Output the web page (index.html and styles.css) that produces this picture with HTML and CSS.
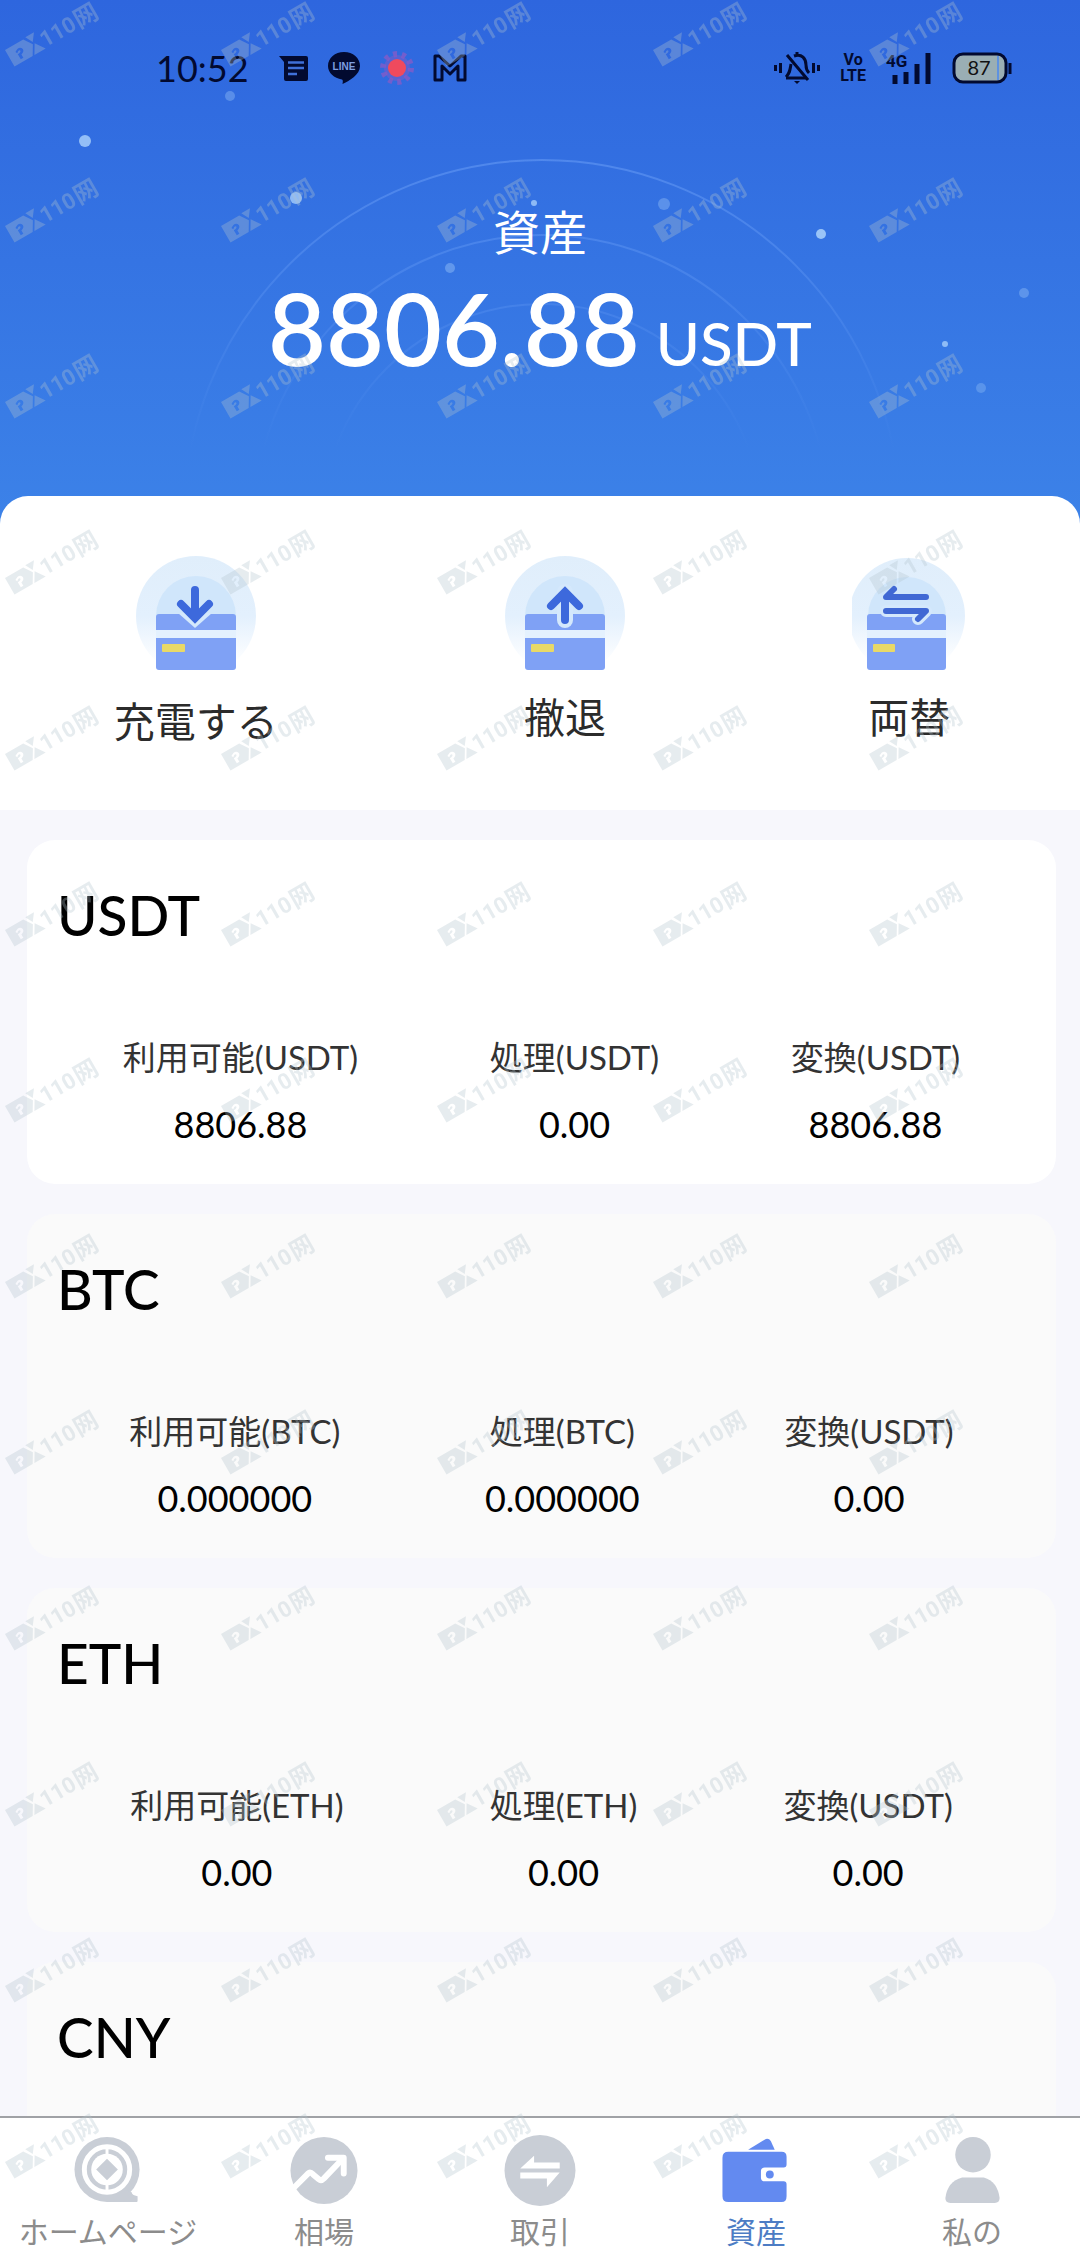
FILE: index.html
```html
<!DOCTYPE html>
<html lang="ja">
	<head>
		<meta charset="UTF-8">
		<meta name="viewport" content="width=device-width, initial-scale=1">
		<title>資産</title>
		<link rel="stylesheet" href="styles.css">
	</head>
	<body>
		<div class="screen">
			<main class="content">
				<header class="hero">
					<svg class="hero-bg" viewBox="0 0 1080 524" preserveAspectRatio="xMidYMin slice" aria-hidden="true">
						<defs>
							<linearGradient id="ring" gradientUnits="userSpaceOnUse" x1="0" y1="150" x2="0" y2="450">
								<stop offset="0" stop-color="#7fb0ff" stop-opacity=".4"/>
								<stop offset="1" stop-color="#7fb0ff" stop-opacity="0"/>
							</linearGradient>
						</defs>
						<g fill="none" stroke="url(#ring)" stroke-width="2">
							<circle cx="542" cy="518" r="358"/>
							<circle cx="542" cy="523" r="288"/>
							<circle cx="542" cy="524" r="220"/>
						</g>
						<g fill="#a5cdfa">
							<circle cx="85" cy="141" r="6" opacity=".85"/>
							<circle cx="230" cy="96" r="5" opacity=".35"/>
							<circle cx="296" cy="198" r="6" opacity=".8"/>
							<circle cx="534" cy="203" r="3" opacity=".8"/>
							<circle cx="664" cy="204" r="6" opacity=".35"/>
							<circle cx="821" cy="234" r="5" opacity=".9"/>
							<circle cx="450" cy="268" r="5" opacity=".4"/>
							<circle cx="1024" cy="293" r="5" opacity=".35"/>
							<circle cx="945" cy="344" r="3" opacity=".8"/>
							<circle cx="981" cy="388" r="5" opacity=".3"/>
						</g>
					</svg>

					<div class="status">
						<div class="status-left">
							<span class="time">10:52</span>
							<svg width="30" height="36" viewBox="0 0 30 36"><path d="M0 6h27q2 0 2 2v21q0 2-2 2H7q-2 0-2-2V12z" fill="#020a30"/><path d="M9 12.500h16M9 18h16M9 24h9" stroke="#3f70d8" stroke-width="2.500"/></svg>
							<svg width="34" height="36" viewBox="0 0 34 36"><path d="M17 2C8 2 1 8 1 16c0 7 6 12 14 13.500 1 .3 1 2 .5 4.500C22 31 33 25 33 16 33 8 26 2 17 2z" fill="#020a30"/><text x="17" y="20" class="line-text" text-anchor="middle">LINE</text></svg>
							<svg width="36" height="36" viewBox="0 0 36 36"><circle cx="18" cy="18" r="14" fill="none" stroke="#8e5ac4" stroke-width="6" stroke-dasharray="4 4.800" opacity=".7"/><circle cx="18" cy="18" r="13" fill="#7d5bc9" opacity=".5"/><circle cx="18" cy="18" r="9" fill="#ef4a5e"/></svg>
							<svg width="34" height="36" viewBox="0 0 34 36"><path d="M2 30V6h4l11 10L28 6h4v24h-7V16l-8 8-8-8v14z" fill="none" stroke="#020a30" stroke-width="3" stroke-linejoin="round"/></svg>
						</div>
						<div class="status-right">
							<svg width="46" height="36" viewBox="0 0 46 36"><g fill="none" stroke="#020a30" stroke-width="3"><path d="M1.500 15v6M6.500 13v10M39.500 13v10M44.500 15v6M13 5l21 25"/><path d="M12 28h20M17 14c-1 6-1 9-5 13M20 6c8-3 12 3 12 9 0 4 1 6 3 8M23 6V2"/></g><path d="M20 31h6l-3 3z" fill="#020a30"/></svg>
							<span class="volte">Vo<br>LTE</span>
							<svg width="46" height="36" viewBox="0 0 46 36"><text x="0" y="17" class="net-text">4G</text><path d="M9 25v9M20 22v12M31 14v20M42 3v31" stroke="#020a30" stroke-width="5"/></svg>
							<svg width="60" height="36" viewBox="0 0 60 36"><rect x="2" y="4" width="52" height="28" rx="9" fill="#9aaeb4" stroke="#020a30" stroke-width="3"/><path d="M46 6v24" stroke="#5e92e0" stroke-width="2"/><path d="M58 13v11" stroke="#020a30" stroke-width="3"/><text x="27" y="25" class="battery-text" text-anchor="middle">87</text></svg>
						</div>
					</div>

					<h1 class="hero-title">資産</h1>
					<p class="amount">8806.88<span class="unit">USDT</span></p>
				</header>

				<section class="actions">
					<svg class="defs" width="0" height="0" aria-hidden="true">
						<defs>
							<linearGradient id="halo" x1="0" y1="0" x2="0" y2="1">
								<stop offset="0" stop-color="#e0eefb"/>
								<stop offset=".5" stop-color="#e3f0fd"/>
								<stop offset=".9" stop-color="#ffffff"/>
							</linearGradient>
						</defs>
					</svg>
					<button type="button" class="action">
						<svg width="120" height="124" viewBox="0 0 120 124">
							<circle cx="60" cy="60" r="60" fill="url(#halo)"/>
							<circle cx="60" cy="60" r="40" fill="#d0e6fb"/>
							<path d="M23 58h74q3 0 3 3v13H20V61q0-3 3-3z" fill="#7fa1f5"/>
							<path d="M20 74h80v8H20z" fill="#e4f1fe"/>
							<path d="M20 82h80v29q0 3-3 3H23q-3 0-3-3z" fill="#7fa1f5"/>
							<rect x="26" y="88" width="23" height="8" rx="1" fill="#e8d967"/>
							<path d="M42 57h34L59 72z" fill="#d4e8fc"/>
							<path d="M59 34v26M45 48l14 14 14-14" fill="none" stroke="#3d69dc" stroke-width="8" stroke-linecap="round"/>
						</svg>
						<span>充電する</span>
					</button>
					<button type="button" class="action">
						<svg width="120" height="120" viewBox="0 0 120 120">
							<circle cx="60" cy="60" r="60" fill="url(#halo)"/>
							<circle cx="60" cy="60" r="40" fill="#d0e6fb"/>
							<path d="M23 58h74q3 0 3 3v13H20V61q0-3 3-3z" fill="#7fa1f5"/>
							<path d="M20 74h80v8H20z" fill="#e4f1fe"/>
							<path d="M20 82h80v29q0 3-3 3H23q-3 0-3-3z" fill="#7fa1f5"/>
							<rect x="26" y="88" width="23" height="8" rx="1" fill="#e8d967"/>
							<path d="M60 36v28" fill="none" stroke="#d4e8fc" stroke-width="16" stroke-linecap="round"/>
							<path d="M60 37v27M46 50l14-14 14 14" fill="none" stroke="#3d69dc" stroke-width="8" stroke-linecap="round"/>
						</svg>
						<span>撤退</span>
					</button>
					<button type="button" class="action">
						<svg width="114" height="120" viewBox="0 0 114 120">
							<circle cx="55" cy="60" r="58" fill="url(#halo)"/>
							<circle cx="55" cy="60" r="39" fill="#d0e6fb"/>
							<path d="M18 58h73q3 0 3 3v13H15V61q0-3 3-3z" fill="#7fa1f5"/>
							<path d="M15 74h79v8H15z" fill="#e4f1fe"/>
							<path d="M15 82h79v29q0 3-3 3H18q-3 0-3-3z" fill="#7fa1f5"/>
							<rect x="21" y="88" width="22" height="8" rx="1" fill="#e8d967"/>
							<path d="M34 55h40l-8 8" fill="none" stroke="#d4e8fc" stroke-width="12" stroke-linecap="round" stroke-linejoin="round"/>
							<path d="M74 41H34l8-8M34 55h40l-8 8" fill="none" stroke="#4068d4" stroke-width="6" stroke-linecap="round" stroke-linejoin="round"/>
						</svg>
						<span>両替</span>
					</button>
				</section>

				<section class="coins">
					<article class="coin coin-active">
						<h2>USDT</h2>
						<dl class="figures">
							<div><dt>利用可能(USDT)</dt><dd>8806.88</dd></div>
							<div><dt>処理(USDT)</dt><dd>0.00</dd></div>
							<div><dt>変換(USDT)</dt><dd>8806.88</dd></div>
						</dl>
					</article>
					<article class="coin">
						<h2>BTC</h2>
						<dl class="figures">
							<div><dt>利用可能(BTC)</dt><dd>0.000000</dd></div>
							<div><dt>処理(BTC)</dt><dd>0.000000</dd></div>
							<div><dt>変換(USDT)</dt><dd>0.00</dd></div>
						</dl>
					</article>
					<article class="coin">
						<h2>ETH</h2>
						<dl class="figures">
							<div><dt>利用可能(ETH)</dt><dd>0.00</dd></div>
							<div><dt>処理(ETH)</dt><dd>0.00</dd></div>
							<div><dt>変換(USDT)</dt><dd>0.00</dd></div>
						</dl>
					</article>
					<article class="coin coin-last">
						<h2>CNY</h2>
					</article>
				</section>
			</main>

			<nav class="tabbar">
				<a href="#home">
					<svg width="72" height="72" viewBox="0 0 72 72"><circle cx="35" cy="35" r="33" fill="#c9ced6"/><path d="M35 48l25 10q0 3 6 4v5q0 1-1 1H35z" fill="#c9ced6"/><circle cx="35" cy="35" r="23" fill="none" stroke="#fff" stroke-width="5"/><circle cx="35" cy="35" r="16" fill="#fff"/><path d="M35 13v8M35 49v8" stroke="#fff" stroke-width="3"/><path d="M35 24l11 11-11 11-11-11z" fill="#c9ced6"/></svg>
					<span>ホームページ</span>
				</a>
				<a href="#market">
					<svg width="72" height="72" viewBox="0 0 72 72"><circle cx="36" cy="36" r="34" fill="#c9ced6"/><path d="M5 54l15-15q2-2 5 1l6 5q2 2 5-1l20-21" fill="none" stroke="#fff" stroke-width="6"/><path d="M40 23h16v16" fill="none" stroke="#fff" stroke-width="6" stroke-linecap="round" stroke-linejoin="round"/></svg>
					<span>相場</span>
				</a>
				<a href="#trade">
					<svg width="72" height="72" viewBox="0 0 72 72"><circle cx="36" cy="36" r="36" fill="#c9ced6"/><path d="M16 34l14-13v7h26v6zM56 38L43 53v-9H16v-6z" fill="#fff"/></svg>
					<span>取引</span>
				</a>
				<a href="#assets" class="current">
					<svg width="72" height="72" viewBox="0 0 72 72"><path d="M28 15l18-11q3-1 5 2l4 9z" fill="#638af0"/><path d="M8 17h54q5 0 5 5v8q0 3-3 3H45q-4 0-4 4v6q0 4 4 4h19q3 0 3 3v12q0 6-5 6H8q-6 0-6-6V23q0-6 6-6z" fill="#638af0"/><circle cx="50" cy="40" r="4" fill="#638af0"/></svg>
					<span>資産</span>
				</a>
				<a href="#mine">
					<svg width="72" height="72" viewBox="0 0 72 72"><circle cx="37" cy="20" r="18" fill="#c9ced6"/><path d="M26 43h22q14 4 16 21 0 5-5 5H14q-5 0-5-5 2-17 17-21z" fill="#c9ced6"/></svg>
					<span>私の</span>
				</a>
			</nav>

			<!-- repeating watermark over the whole screen -->
			<svg class="watermark" width="100%" height="100%" aria-hidden="true">
				<defs>
					<pattern id="mark" width="216" height="176" patternUnits="userSpaceOnUse">
						<g transform="translate(5 50) rotate(-30)">
							<path d="M0 0h21l6 9-6 10H0zM24-1h10l-6 8zM29 9l7 10H23zM8 7q6-4 8 1 0 3-4 4v4h-3v-6q4 0 4-2-1-2-4 1z" fill-rule="evenodd"/>
							<text x="36" y="18" class="mark-num">110</text>
							<text x="75" y="19" class="mark-cjk">网</text>
						</g>
					</pattern>
				</defs>
				<rect width="100%" height="100%" fill="url(#mark)"/>
			</svg>
		</div>
	</body>
</html>
```
FILE: styles.css
```css
*{
	margin: 0;
	padding: 0;
	box-sizing: border-box;
}
body{
	font-family: Lato, "Noto Sans CJK JP", sans-serif;
	color: #111;
	background: #f7f7fc;
}
.screen{
	position: relative;
	display: flex;
	flex-direction: column;
	height: 100vh;
}
.content{
	flex: 1;
	min-height: 0;
	overflow: hidden;
}

/* header */
.hero{
	position: relative;
	padding-bottom: 142px;
	color: #fff;
	text-align: center;
	background: linear-gradient(#2e66de, #3c82e8);
}
.hero-bg{
	position: absolute;
	left: 0;
	top: 0;
	width: 100%;
	height: 100%;
}
.status{
	position: relative;
	display: flex;
	justify-content: space-between;
	padding: 50px 68px 50px 156px;
	color: #020a30;
}
.status-left, .status-right{
	display: flex;
	align-items: center;
	height: 36px;
}
.status-left{
	gap: 18px;
}
.status-right{
	gap: 20px;
}
.time{
	margin-right: 12px;
	font-size: 36px;
	line-height: 36px;
}
.volte{
	font: bold 16px/16px Roboto, sans-serif;
	text-align: center;
}
.line-text{
	font: bold 10px "Liberation Sans", sans-serif;
	fill: #7f9fe0;
}
.net-text{
	font: bold 17px Roboto, sans-serif;
	fill: #020a30;
}
.battery-text{
	font: 20px Lato, sans-serif;
	fill: #111;
}
.hero-title{
	position: relative;
	margin-top: 66px;
	font-size: 47px;
	font-weight: 400;
	line-height: 60px;
}
.amount{
	position: relative;
	margin-top: 10px;
	font-size: 100px;
	font-weight: 600;
	line-height: 110px;
}
.unit{
	margin-left: 16px;
	font-size: 60px;
	font-weight: 500;
	line-height: 60px;
}

/* actions */
.actions{
	position: relative;
	display: flex;
	justify-content: space-around;
	align-items: flex-start;
	margin-top: -28px;
	padding: 60px 0 58px;
	border-radius: 28px 28px 0 0;
	background: #fff;
}
.defs{
	position: absolute;
}
.action{
	display: flex;
	flex-direction: column;
	align-items: center;
	border: none;
	background: none;
	font-family: inherit;
	font-size: 41px;
	line-height: 60px;
	color: #2b2b2b;
}
.action span{
	margin-top: 12px;
}

/* coin list */
.coins{
	display: flex;
	flex-direction: column;
	gap: 30px;
	padding: 30px 24px 30px 27px;
}
.coin{
	padding: 40px 30px 37px;
	border-radius: 28px;
	background: #fafafa;
}
.coin-active{
	background: #fff;
}
.coin-last{
	min-height: 344px;
}
.coin h2{
	font-size: 55px;
	font-weight: 500;
	line-height: 70px;
	color: #000;
}
.figures{
	display: flex;
	justify-content: space-around;
	margin-top: 84px;
	text-align: center;
}
.figures dt{
	font-size: 33px;
	line-height: 46px;
	color: #333;
}
.figures dd{
	margin-top: 21px;
	font-size: 36px;
	line-height: 46px;
	color: #000;
}

/* bottom tabs */
.tabbar{
	display: flex;
	padding: 17px 0 0;
	height: 140px;
	border-top: 2px solid #a0a2a6;
	background: #fff;
}
.tabbar a{
	flex: 1;
	display: flex;
	flex-direction: column;
	align-items: center;
	font-size: 30px;
	line-height: 50px;
	color: #8c8c8c;
	text-decoration: none;
}
.tabbar .current{
	color: #4d7cc4;
}

.watermark{
	position: absolute;
	left: 0;
	top: 0;
	pointer-events: none;
	fill: #b4c5ce;
	opacity: .32;
}
.mark-num{
	font: bold 22px Roboto, sans-serif;
}
.mark-cjk{
	font: bold 24px "Noto Sans CJK SC", sans-serif;
}
```
